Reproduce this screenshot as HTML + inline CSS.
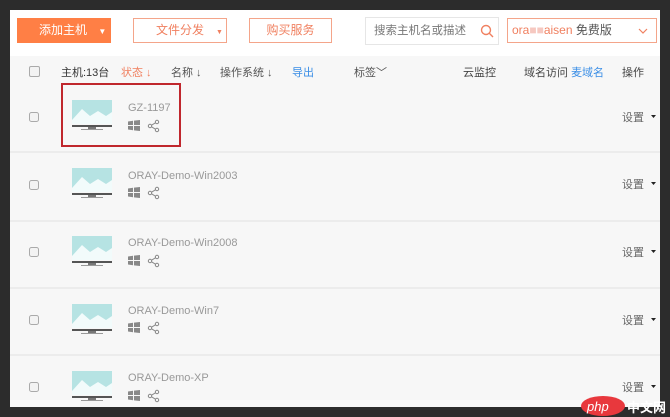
<!DOCTYPE html><html><head><meta charset="utf-8"><style>
body{margin:0;width:670px;height:417px;background:#2c2c2c;font-family:"Liberation Sans","Noto Sans CJK SC",sans-serif;overflow:hidden;position:relative}
.c{position:absolute;left:10px;top:10px;width:650px;height:397px;background:#f7f7f7;overflow:hidden}
.tb{position:absolute;left:0;top:0;width:650px;height:46px;background:#fff}
.a{position:absolute;font-size:12px;white-space:nowrap}
.btn{position:absolute;top:8px;height:25px;box-sizing:border-box;border:1px solid #f4a58a;color:#f08060;font-size:12px;line-height:23px;background:#fff;white-space:nowrap}
.cb{position:absolute;left:19px;width:9px;height:9px;border:1px solid #aaa;border-radius:2px;background:#f3f3f3}
.row{position:absolute;left:0;width:650px;height:67px;border-bottom:2px solid #ececec}
</style></head><body><div class="c">
<div class="tb"></div>
<div class="btn" style="left:7px;width:94px;background:#ff7f45;border-color:#ff7f45;color:#fff;padding-left:21px">添加主机 <span style="font-size:8px;margin-left:8px">▼</span></div>
<div class="btn" style="left:123px;width:94px;padding-left:22px">文件分发<span style="font-size:7px;margin-left:12px">▼</span></div>
<div class="btn" style="left:239px;width:83px;text-align:center">购买服务</div>
<div class="btn" style="left:355px;width:134px;border-color:#e6e6e6;color:#777;padding-left:8px;top:7px;height:28px;line-height:26px;font-size:11.5px">搜索主机名或描述<svg style="position:absolute;right:4px;top:6px" width="14" height="14"><circle cx="6" cy="6" r="4.5" fill="none" stroke="#f08060" stroke-width="1.4"/><line x1="9.3" y1="9.3" x2="13" y2="13" stroke="#f08060" stroke-width="1.4"/></svg></div>
<div class="btn" style="left:497px;width:150px;height:25px;padding-left:4px;color:#f08060">ora<span style="color:#f6c8c0">■■</span>aisen <span style="color:#555">免费版</span><svg style="position:absolute;right:8px;top:9px" width="10" height="6"><path d="M1 1L5 5L9 1" fill="none" stroke="#f08060" stroke-width="1.2"/></svg></div>
<div class="cb" style="top:56px"></div>
<div class="a" style="left:51px;top:54px;color:#333;font-size:11px">主机:13台</div>
<div class="a" style="left:111px;top:54px;color:#f08060;font-size:11px">状态 ↓</div>
<div class="a" style="left:161px;top:54px;color:#555;font-size:11px">名称 ↓</div>
<div class="a" style="left:210px;top:54px;color:#555;font-size:11px">操作系统 ↓</div>
<div class="a" style="left:282px;top:54px;color:#3a8ee6;font-size:11px">导出</div>
<div class="a" style="left:344px;top:54px;color:#555;font-size:11px">标签﹀</div>
<div class="a" style="left:453px;top:54px;color:#444;font-size:11px">云监控</div>
<div class="a" style="left:514px;top:54px;color:#444;font-size:11px">域名访问 <span style="color:#3a8ee6">麦域名</span></div>
<div class="a" style="left:612px;top:54px;color:#444;font-size:11px">操作</div>
<div class="row" style="top:74px"></div>
<div class="row" style="top:143px"></div>
<div class="row" style="top:210px"></div>
<div class="row" style="top:277px"></div>
<div class="row" style="top:345px"></div>
<div style="position:absolute;left:51px;top:73px;width:116px;height:60px;border:2px solid #c0272d"></div>
</div>
<svg width="0" height="0" style="position:absolute"><defs>
<g id="m"><rect x="0" y="0" width="40" height="24" fill="#b6e3e3"/><path d="M0 24 L0 20 L10 9 L18 16 L26 11 L34 16 L40 12 L40 24Z" fill="#f2fbfb"/><rect x="0" y="25" width="40" height="2" fill="#555"/><rect x="16" y="27" width="8" height="2" fill="#777"/><rect x="9" y="29" width="22" height="1" fill="#999"/></g>
<g id="w"><path d="M0 1.5L5 .8V5H0ZM6 .6L12 0V5H6ZM0 6H5V10.2L0 9.5ZM6 6H12V11L6 10.4Z" fill="#888"/></g>
<g id="s"><circle cx="9" cy="2" r="1.7" fill="none" stroke="#888"/><circle cx="2" cy="6" r="1.7" fill="none" stroke="#888"/><circle cx="9" cy="10" r="1.7" fill="none" stroke="#888"/><path d="M3.5 5.2L7.5 2.8M3.5 6.8L7.5 9.2" stroke="#888"/></g>
</defs></svg>
<svg width="670" height="417" style="position:absolute;left:0;top:0">
<g font-family="Liberation Sans, sans-serif" font-size="11" fill="#999">
<use href="#m" x="72" y="100"/><text x="128" y="111">GZ-1197</text><use href="#w" x="128" y="120"/><use href="#s" x="148" y="120"/>
<use href="#m" x="72" y="168"/><text x="128" y="179">ORAY-Demo-Win2003</text><use href="#w" x="128" y="187"/><use href="#s" x="148" y="187"/>
<use href="#m" x="72" y="236"/><text x="128" y="246">ORAY-Demo-Win2008</text><use href="#w" x="128" y="255"/><use href="#s" x="148" y="255"/>
<use href="#m" x="72" y="304"/><text x="128" y="314">ORAY-Demo-Win7</text><use href="#w" x="128" y="322"/><use href="#s" x="148" y="322"/>
<use href="#m" x="72" y="371"/><text x="128" y="381">ORAY-Demo-XP</text><use href="#w" x="128" y="390"/><use href="#s" x="148" y="390"/>
</g>
<g font-family="Liberation Sans, Noto Sans CJK SC, sans-serif" font-size="11" fill="#666">
<text x="622" y="121">设置</text><text x="622" y="188">设置</text><text x="622" y="256">设置</text><text x="622" y="324">设置</text><text x="622" y="391">设置</text>
</g>
<g fill="#222"><path d="M651 115l5 0-2.5 3z"/><path d="M651 182l5 0-2.5 3z"/><path d="M651 250l5 0-2.5 3z"/><path d="M651 318l5 0-2.5 3z"/><path d="M651 385l5 0-2.5 3z"/></g>
<g fill="#f3f3f3" stroke="#aaa"><rect x="29.5" y="112.5" width="9" height="9" rx="2"/><rect x="29.5" y="180.5" width="9" height="9" rx="2"/><rect x="29.5" y="247.5" width="9" height="9" rx="2"/><rect x="29.5" y="315.5" width="9" height="9" rx="2"/><rect x="29.5" y="382.5" width="9" height="9" rx="2"/></g>
<ellipse cx="603" cy="406" rx="22" ry="10" fill="#e8383d"/><text x="587" y="411" font-family="Liberation Sans" font-size="13" font-style="italic" fill="#fff">php</text>
<text x="627" y="412" font-family="Noto Sans CJK SC" font-size="13" fill="#fff" font-weight="bold">中文网</text>
</svg>
</body></html>
